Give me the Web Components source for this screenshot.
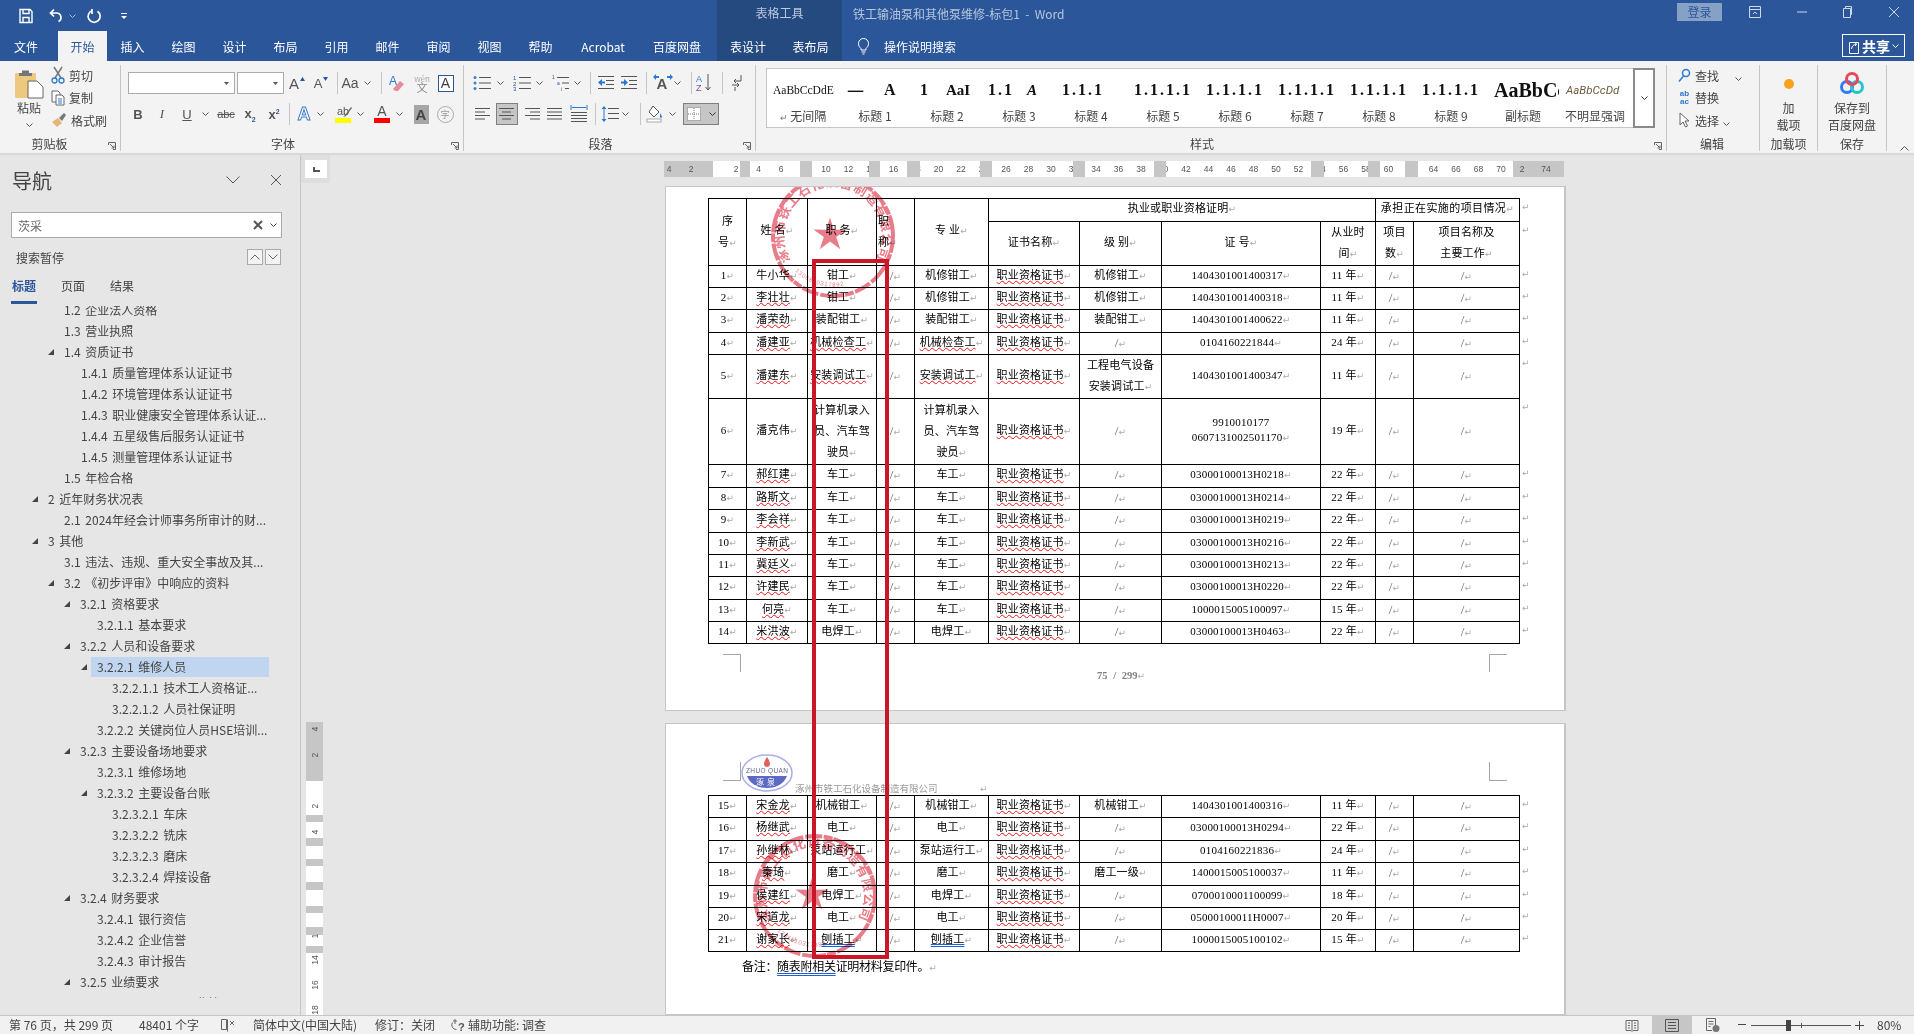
<!DOCTYPE html>
<html lang="zh">
<head>
<meta charset="utf-8">
<title>Word</title>
<style>
  html, body { margin: 0; height: 100%; overflow: hidden; background: #e6e6e6; }
  body { font: 12px "Noto Sans CJK SC", "Noto Sans", sans-serif; color: #444; }
</style>
</head>
<body>
<word-app></word-app>
<script>
const UI = "'Noto Sans CJK SC','Noto Sans',sans-serif";
const SANS = "'Liberation Sans',sans-serif";
const SERIF = "'Liberation Serif','Noto Sans CJK SC',serif";

// place items by centre x, in flow: each one gets the margin that is left over
function P(start, items) {
  let cur = start;
  return items.map(([c, w, h]) => {
    const l = c - w / 2, m = l - cur;
    cur = l + w;
    return `<span class="c" style="margin-left:${m}px;width:${w}px">${h}</span>`;
  }).join('');
}
const chev = (col = '#555') => `<svg width="7" height="4" viewBox="0 0 7 4"><path d="M.5.5l3 3 3-3" fill="none" stroke="${col}"/></svg>`;
const sep = '<i style="display:block;width:1px;height:22px;background:#c6c6c6"></i>';
const lines = (arr, col = '#555') => `<svg width="16" height="14" viewBox="0 0 16 14">${arr.map(([x, w], i) => `<rect x="${x}" y="${1 + i * 3.5}" width="${w}" height="1" fill="${col}"/>`).join('')}</svg>`;

class Base extends HTMLElement {
  connectedCallback() {
    if (!this.shadowRoot) this.attachShadow({ mode: 'open' }).innerHTML = this.render();
  }
}

class WordApp extends Base {
  render() {
    return `<style>
      :host { display: flex; flex-direction: column; width: 1914px; height: 1034px; overflow: hidden; }
      .mid { flex: 1; display: flex; min-height: 0; }
    </style>
    <word-titlebar></word-titlebar>
    <word-tabs></word-tabs>
    <word-ribbon></word-ribbon>
    <div class="mid"><word-nav></word-nav><word-doc></word-doc></div>
    <word-status></word-status>`;
  }
}

class WordTitlebar extends Base {
  render() {
    const ic = 'fill="none" stroke="#fff"';
    return `<style>
      :host { display: flex; height: 31px; background: #2b579a; color: #fff; }
      .c { display: flex; align-items: center; justify-content: center; flex-shrink: 0; height: 31px; }
      .ctx { height: 100%; width: 100%; background: #244a80; color: #b9c8de; display: flex; align-items: center; justify-content: center; padding-bottom: 6px; box-sizing: border-box; }
      .title { width: 100%; color: #b6c5dc; padding-bottom: 5px; white-space: pre; }
      .login { width: 100%; height: 18px; margin-bottom: 8px; background: #86a0c6; color: #2b579a; text-align: center; line-height: 18px; }
    </style>
    ${P(0, [
      [26, 18, `<svg width="16" height="16" viewBox="0 0 16 16" ${ic} stroke-width="1.4"><path d="M2 1.5h10l2 2v11H2z"/><path d="M5 1.5v4h6v-4M5 14.5v-5h6v5"/></svg>`],
      [56, 18, `<svg width="16" height="16" viewBox="0 0 16 16" ${ic} stroke-width="1.7"><path d="M6 1.5L2.5 5 6 8.500M2.500 5h6a4.500 4.500 0 0 1 2 8.500"/></svg>`],
      [72, 9, chev('#a9bcd8')],
      [94, 18, `<svg width="16" height="16" viewBox="0 0 16 16" ${ic} stroke-width="1.7"><path d="M6.500 2.500a6 6 0 1 0 5 .800M6 1v5"/></svg>`],
      [124, 10, `<svg width="8" height="8" viewBox="0 0 8 8"><path d="M1 1h6v1H1z" fill="#fff"/><path d="M1 4h6L4 7z" fill="#fff"/></svg>`],
      [779.500, 125, `<div class="ctx">表格工具</div>`],
      [973, 240, `<div class="title">铁工输油泵和其他泵维修-标包1  -  Word</div>`],
      [1699.500, 45, `<div class="login">登录</div>`],
      [1755, 16, `<svg style="margin-bottom:8px" width="14" height="14" viewBox="0 0 14 14" fill="none" stroke="#cdd8e8"><path d="M1.500 1.500h11v11h-11zM1.500 4.500h11M5 9l2-2 2 2"/></svg>`],
      [1802, 16, `<svg style="margin-bottom:8px" width="12" height="12" viewBox="0 0 12 12"><path d="M1 6h10" stroke="#cdd8e8"/></svg>`],
      [1847, 16, `<svg style="margin-bottom:8px" width="12" height="14" viewBox="0 0 12 14" fill="none" stroke="#cdd8e8"><path d="M2.500 3.500h7v9h-7zM4.500 3.500v-2h6v8h-1"/></svg>`],
      [1894, 16, `<svg style="margin-bottom:8px" width="12" height="12" viewBox="0 0 12 12" fill="none" stroke="#cdd8e8"><path d="M1 1l10 10M11 1L1 11"/></svg>`]
    ])}`;
  }
}

class WordTabs extends Base {
  render() {
    const t = (w, s, cls = '') => `<div class="t ${cls}" style="width:${w}px">${s}</div>`;
    return `<style>
      :host { display: flex; height: 30px; background: #2b579a; color: #fff; align-items: stretch; }
      .t { display: flex; align-items: center; justify-content: center; flex-shrink: 0; }
      .on { background: #f3f3f3; color: #2b579a; }
      .ctx { background: #244a80; }
      .bulb { margin-left: 15px; display: flex; align-items: center; gap: 14px; }
      .share { margin: 3px 9px 4px auto; width: 63px; box-sizing: border-box; border: 1px solid #fff; display: flex; align-items: center; justify-content: center; gap: 2px; font-size: 14px; font-weight: 700; }
    </style>
    ${t(52, '文件')}<div style="width:6px"></div>${t(49, '开始', 'on')}
    ${['插入', '绘图', '设计', '布局', '引用', '邮件', '审阅', '视图', '帮助'].map(s => t(51, s)).join('')}
    ${t(74, 'Acrobat')}${t(74, '百度网盘')}<div style="width:3px"></div>
    ${t(62, '表设计', 'ctx')}${t(63, '表布局', 'ctx')}
    <div class="bulb"><svg width="13" height="18" viewBox="0 0 13 18" fill="none" stroke="#fff"><path d="M4 11.500C2.500 10 1.500 9 1.500 6.500a5 5 0 0 1 10 0c0 2.500-1 3.500-2.500 5V13H4zM4.500 15h4M5.500 17h2"/></svg>操作说明搜索</div>
    <div class="share"><svg width="12" height="18" viewBox="0 0 12 18" fill="none" stroke="#fff"><path d="M1.500 5.500h9v11h-9z"/><path d="M3.500 12c.500-3 2-4.500 5-5M6.500 5.500L8.500 7 7 9"/></svg>共享${chev('#fff')}</div>`;
  }
}

class WordRibbon extends Base {
  render() {
    const A = (size, extra = '') => `<span style="font:${size}px ${SANS};color:#555;${extra}">A</span>`;
    const tri = (col, d) => `<svg style="margin:-9px 0 0 1px" width="5" height="4" viewBox="0 0 5 4"><path d="${d}" fill="${col}"/></svg>`;
    const launch = `<svg class="launch" width="8" height="8" viewBox="0 0 8 8" fill="none" stroke="#666"><path d="M.5 3V.5H7.500V7.500H5M2 2l4 4M6 3.500V6H3.500"/></svg>`;
    const fontRow1 = P(121, [
      [181.500, 107, `<div class="box"><svg width="5" height="3"><path d="M0 0h5L2.500 3z" fill="#555"/></svg></div>`],
      [260.500, 47, `<div class="box"><svg width="5" height="3"><path d="M0 0h5L2.500 3z" fill="#555"/></svg></div>`],
      [297, 20, A(15) + tri('#2b579a', 'M0 4h5L2.500 0z')],
      [321, 20, A(13) + tri('#2b579a', 'M0 0h5L2.500 4z')],
      [337, 1, sep],
      [350, 20, `<span style="font:14px ${SANS};color:#555">Aa</span>`],
      [367, 9, chev()],
      [381, 1, sep],
      [397, 18, `<svg width="18" height="18" viewBox="0 0 18 18"><text x="1" y="11" font-family="Liberation Sans" font-size="12" fill="#2b7ad0">A</text><path d="M5 15l7-8 4 3-6 7H7z" fill="#e78b9a"/></svg>`],
      [422, 18, `<span class="wen"><small>wén</small><b>文</b></span>`],
      [445.500, 16, `<span class="abox">A</span>`]
    ]);
    const fontRow2 = P(121, [
      [138, 14, `<span class="g" style="font-weight:700">B</span>`],
      [162, 14, `<span class="g" style="font-family:'Liberation Serif';font-style:italic">I</span>`],
      [187, 14, `<span class="g" style="text-decoration:underline">U</span>`],
      [205, 9, chev()],
      [226, 20, `<span class="g" style="text-decoration:line-through;font-size:11px">abc</span>`],
      [250, 16, `<span class="g" style="font-weight:700">x<sub style="font-size:7px;color:#2b579a">2</sub></span>`],
      [274, 16, `<span class="g" style="font-weight:700">x<sup style="font-size:7px;color:#2b579a">2</sup></span>`],
      [289, 1, sep],
      [304, 18, `<span style="font:700 18px ${SANS};color:#fff;-webkit-text-stroke:1px #3f7fc8">A</span>`],
      [320, 9, chev()],
      [343, 20, `<span class="bar" style="--b:#ffff00"><span>ab</span><svg style="position:absolute;left:7px;top:1px" width="11" height="12" viewBox="0 0 11 12"><path d="M9 1L3 9 1 11l3-1 6-8z" fill="#6a6a6a"/></svg></span>`],
      [360, 9, chev()],
      [382, 18, `<span class="bar" style="--b:#ff0000"><span style="font-size:14px">A</span></span>`],
      [399, 9, chev()],
      [421, 16, `<span style="display:block;width:15px;height:19px;background:#a6a6a6;color:#444;font:700 15px/19px ${SANS};text-align:center">A</span>`],
      [445, 18, `<span style="width:15px;height:15px;border:1px solid #aaa;border-radius:50%;font-size:9px;line-height:15px;text-align:center;color:#999">字</span>`]
    ]);
    const blist = `<svg width="18" height="16" viewBox="0 0 18 16"><g fill="#3f7fc8"><circle cx="2" cy="2.500" r="1.500"/><circle cx="2" cy="8" r="1.500"/><circle cx="2" cy="13.500" r="1.500"/></g><g fill="#555"><rect x="6" y="2" width="12" height="1"/><rect x="6" y="7.500" width="12" height="1"/><rect x="6" y="13" width="12" height="1"/></g></svg>`;
    const nlist = `<svg width="18" height="16" viewBox="0 0 18 16"><g fill="#2b579a" font-family="Liberation Sans" font-size="6"><text x="0" y="5">1</text><text x="0" y="10.500">2</text><text x="0" y="16">3</text></g><g fill="#555"><rect x="6" y="2" width="12" height="1"/><rect x="6" y="7.500" width="12" height="1"/><rect x="6" y="13" width="12" height="1"/></g></svg>`;
    const mlist = `<svg width="18" height="16" viewBox="0 0 18 16"><g fill="#2b579a" font-family="Liberation Sans" font-size="5"><text x="0" y="4">1</text><text x="5" y="10">a</text><text x="9" y="16">i</text></g><g fill="#555"><rect x="5" y="2" width="12" height="1"/><rect x="10" y="7.500" width="7" height="1"/><rect x="13" y="13" width="4" height="1"/></g></svg>`;
    const dent = (d) => `<svg width="18" height="16" viewBox="0 0 18 16"><g fill="#555"><rect x="1" y="1" width="16" height="1"/><rect x="9" y="5" width="8" height="1"/><rect x="9" y="9" width="8" height="1"/><rect x="1" y="13" width="16" height="1"/></g><path d="${d}" fill="#2b7ad0"/></svg>`;
    const paraRow1 = P(464, [
      [482, 20, blist], [500, 9, chev()], [522, 20, nlist], [539, 9, chev()], [561, 20, mlist], [577, 9, chev()],
      [590, 1, sep],
      [606, 18, dent('M1 7.500L5 4v2.500h3v2H5V11z')], [629, 18, dent('M8 7.500L4 4v2.500H1v2h3V11z')],
      [646, 1, sep],
      [662, 20, `<span style="position:relative;font:700 15px ${SANS};color:#555">A<svg style="position:absolute;left:-4px;top:-1px" width="20" height="6" viewBox="0 0 20 6"><path d="M0 3l3-3v2h3v2H3v2zM20 3l-3-3v2h-3v2h3v2z" fill="#2b7ad0"/></svg></span>`],
      [677, 9, chev()],
      [691, 1, sep],
      [704, 18, `<svg width="18" height="20" viewBox="0 0 18 20"><text x="1" y="9" font-family="Liberation Sans" font-size="9" fill="#2b7ad0">A</text><text x="1" y="18" font-family="Liberation Sans" font-size="9" fill="#7a4fa8">Z</text><path d="M13 1v16M10.500 14l2.500 3 2.500-3" fill="none" stroke="#555"/></svg>`],
      [722, 1, sep],
      [737, 14, `<svg width="12" height="18" viewBox="0 0 12 18" fill="none" stroke="#555"><path d="M10 1v6H3M5 5L3 7l2 2M1 11h7M6 9l2 2-2 2M4 13v4" /></svg>`]
    ]);
    const shade = `<svg width="18" height="18" viewBox="0 0 18 18"><path d="M7 1l6 6-5 5-5-5z" fill="#fff" stroke="#555"/><path d="M14 8s2 3 2 4-2 1-2 0 0-4 0-4z" fill="#2b7ad0"/><rect x="1" y="14" width="14" height="3" fill="#fff" stroke="#aaa"/></svg>`;
    const paraRow2 = P(464, [
      [483, 16, lines([[0, 15], [0, 10], [0, 15], [0, 10]])],
      [507, 22, `<span class="act" style="width:22px">${lines([[0, 15], [3, 9], [0, 15], [3, 9]])}</span>`],
      [532, 16, lines([[1, 15], [6, 10], [1, 15], [6, 10]])],
      [555, 16, lines([[0, 15], [0, 15], [0, 15], [0, 15]])],
      [579, 18, `<svg width="18" height="18" viewBox="0 0 18 18"><g fill="#555"><rect x="1" y="7" width="16" height="1"/><rect x="1" y="10" width="16" height="1"/><rect x="1" y="13" width="16" height="1"/><rect x="1" y="16" width="16" height="1"/></g><path d="M1 0v5M17 0v5M2 2.500h14" stroke="#2b7ad0" fill="none"/></svg>`],
      [595, 1, sep],
      [610, 18, `<svg width="18" height="18" viewBox="0 0 18 18"><g fill="#555"><rect x="7" y="3" width="11" height="1"/><rect x="7" y="8" width="11" height="1"/><rect x="7" y="13" width="11" height="1"/></g><path d="M3 1L.5 4h5zM3 17l-2.500-3h5zM2.500 4h1v10h-1z" fill="#2b7ad0"/></svg>`],
      [625, 9, chev()],
      [640, 1, sep],
      [655, 18, shade],
      [672, 9, chev()],
      [701, 36, `<span class="act" style="width:36px;gap:8px"><svg width="14" height="14" viewBox="0 0 14 14"><rect x=".5" y=".5" width="13" height="13" fill="#fff" stroke="#777" stroke-dasharray="1 1"/><path d="M7 1v12M1 7h12" stroke="#777" stroke-dasharray="1 1"/></svg>${chev('#333')}</span>`]
    ]);

    const sty = (label, preview) => `<div class="si"><div class="pv">${preview}</div><div class="sl">${label}</div></div>`;
    const num = (s, ml = 0) => `<span style="font:700 16px ${SERIF};letter-spacing:2px;margin-left:${ml}px;color:#111">${s}</span>`;
    const styles = [
      sty('<span style="font-size:9px;color:#777">↵</span> 无间隔', `<span style="font:11.500px ${SERIF};margin-left:6px;color:#111">AaBbCcDdE</span>`),
      sty('标题 1', `<span style="font:400 17px ${UI};color:#111;margin-left:8px">一</span><span style="font:700 16px ${SERIF};margin-left:20px;color:#111">A</span>`),
      sty('标题 2', num('1', 9) + `<span style="font:700 15px ${SERIF};margin-left:16px;color:#111">AaI</span>`),
      sty('标题 3', num('1.1', 5) + `<span style="font:italic 700 15px ${SERIF};margin-left:13px;color:#111">A</span>`),
      sty('标题 4', num('1.1.1', 7)), sty('标题 5', num('1.1.1.1', 7)), sty('标题 6', num('1.1.1.1', 7)),
      sty('标题 7', num('1.1.1.1', 7)), sty('标题 8', num('1.1.1.1', 7)), sty('标题 9', num('1.1.1.1', 7)),
      sty('副标题', `<span style="font:700 20px ${SERIF};margin-left:7px;color:#111">AaBbCcDd</span>`),
      sty('不明显强调', `<span style="font:italic 11.500px Roboto,sans-serif;margin-left:7px;color:#6b5a3a">AaBbCcDd</span>`)
    ].join('');

    return `<style>
      :host { display: flex; height: 94px; box-sizing: border-box; background: #f3f3f3; border-bottom: 2px solid #d8d8d8; position: relative; color: #444; }
      .c { display: flex; align-items: center; justify-content: center; flex-shrink: 0; }
      .g0 { box-sizing: border-box; border-right: 1px solid #c6c6c6; height: 86px; margin-top: 4px; display: flex; flex-direction: column; flex-shrink: 0; position: relative; }
      .body { height: 72px; }
      .lab { height: 14px; line-height: 14px; text-align: center; padding-right: 18px; }
      .launch { position: absolute; right: 4px; bottom: 1px; }
      .r2 { padding-top: 7px; box-sizing: border-box; display: flex; flex-direction: column; gap: 9px; }
      .row { display: flex; height: 22px; align-items: center; }
      .box { width: 100%; height: 22px; box-sizing: border-box; background: #fff; border: 1px solid #ababab; display: flex; align-items: center; justify-content: flex-end; padding-right: 5px; }
      .wen { display: flex; flex-direction: column; align-items: center; line-height: 9px; color: #aaa; }
      .wen small { font-size: 8px; } .wen b { font-weight: 400; font-size: 11px; color: #888; }
      .abox { width: 14px; height: 15px; border: 1px solid #2b579a; font: 14px/15px ${SANS}; text-align: center; color: #444; background: #fff; }
      .g { font: 13px ${SANS}; color: #555; }
      .bar { position: relative; display: flex; flex-direction: column; align-items: center; width: 16px; font: 11px/13px ${SANS}; color: #555; }
      .bar::after { content: ""; width: 16px; height: 5px; background: var(--b); }
      .act { height: 22px; box-sizing: border-box; background: #c6c6c6; border: 1px solid #7f7f7f; display: flex; align-items: center; justify-content: center; }
      .cut { display: flex; height: 72px; }
      .paste { margin-left: 14px; width: 30px; display: flex; flex-direction: column; align-items: center; padding-top: 4px; box-sizing: border-box; }
      .paste span { line-height: 18px; }
      .list { display: flex; flex-direction: column; margin-top: -1px; }
      .li { height: 22.500px; display: flex; align-items: center; gap: 4px; white-space: nowrap; }
      .gallery { display: flex; margin: 3px 0 0 10px; height: 60px; }
      .items { display: flex; width: 867px; box-sizing: border-box; background: #fff; border: 1px solid #c6c6c6; border-right: 0; }
      .si { width: 72px; flex-shrink: 0; overflow: hidden; }
      .pv { height: 36px; margin-top: 3px; display: flex; align-items: center; white-space: nowrap; overflow: hidden; }
      .sl { text-align: center; line-height: 16px; white-space: nowrap; }
      .scroll { width: 22px; box-sizing: border-box; border: 2px solid #8a8a8a; background: #fff; display: flex; align-items: center; justify-content: center; }
      .tall { display: flex; flex-direction: column; align-items: center; height: 72px; padding-top: 5px; box-sizing: border-box; }
      .tall .ico { height: 27px; display: flex; align-items: center; }
      .tall div.tx { line-height: 17px; text-align: center; margin-top: 2px; }
      .lab2 { padding-right: 0; }
      .collapse { position: absolute; left: 1900px; top: 85px; }
    </style>
    <div class="g0" style="width:121px">
      <div class="body cut">
        <div class="paste">
          <svg width="30" height="30" viewBox="0 0 30 30"><rect x="1" y="4" width="21" height="25" rx="1" fill="#edc87e"/><path d="M8 4V1.500h7V4h3v3H5V4z" fill="#767676"/><path d="M14 12h9l6 6v11H14z" fill="#fff" stroke="#666"/></svg>
          <span>粘贴</span>
          <span style="line-height:10px">${chev()}</span>
        </div>
        <div class="list" style="margin-left:7px">
          <div class="li"><svg width="14" height="18" viewBox="0 0 14 18" fill="none"><path d="M3 1l7 11M11 1L4 12" stroke="#777" stroke-width="1.500"/><circle cx="3.500" cy="14.500" r="2.500" stroke="#2b7ad0" stroke-width="1.300"/><circle cx="10.500" cy="14.500" r="2.500" stroke="#2b7ad0" stroke-width="1.300"/></svg>剪切</div>
          <div class="li"><svg width="14" height="16" viewBox="0 0 14 16" fill="#fff" stroke="#666"><path d="M1 1h6l2 2v9H1z"/><path d="M5 5h6l2 2v8H5z"/><path d="M7 9h4M7 11h4M7 13h4" stroke="#2b7ad0"/></svg>复制</div>
          <div class="li"><svg width="16" height="16" viewBox="0 0 16 16"><path d="M1 10l6-4 4 5-5 4z" fill="#e0b878"/><path d="M8 6l5-5 2 2-4 6z" fill="#777"/></svg>格式刷</div>
        </div>
      </div>
      <div class="lab" style="padding-right:21px">剪贴板</div>
      ${launch}
    </div>
    <div class="g0" style="width:343px">
      <div class="body r2"><div class="row">${fontRow1}</div><div class="row">${fontRow2}</div></div>
      <div class="lab">字体</div>
      ${launch}
    </div>
    <div class="g0" style="width:292px">
      <div class="body r2"><div class="row">${paraRow1}</div><div class="row">${paraRow2}</div></div>
      <div class="lab">段落</div>
      ${launch}
    </div>
    <div class="g0" style="width:911px">
      <div class="body gallery"><div class="items">${styles}</div><div class="scroll">${chev('#333')}</div></div>
      <div class="lab" style="margin-top:9px">样式</div>
      ${launch}
    </div>
    <div class="g0" style="width:93px">
      <div class="body list" style="padding-left:11px;box-sizing:border-box">
        <div class="li"><svg width="13" height="15" viewBox="0 0 13 15" fill="none" stroke="#2b7ad0" stroke-width="1.500"><circle cx="8" cy="5" r="3.500"/><path d="M5.500 8L1 13.500"/></svg>查找<span style="margin-left:12px">${chev()}</span></div>
        <div class="li"><span style="font:700 8px/8px ${SANS};color:#2b7ad0;text-align:center;width:13px">ab<br>ac</span>替换</div>
        <div class="li"><svg width="13" height="17" viewBox="0 0 13 17" fill="#fff" stroke="#666"><path d="M2 1v12l3-3 2.500 5 2-1-2.500-5h4z"/></svg>选择<span>${chev()}</span></div>
      </div>
      <div class="lab lab2" style="padding-right:2px;margin-top:1px">编辑</div>
    </div>
    <div class="g0" style="width:58px">
      <div class="body tall"><div class="ico"><svg width="14" height="14" viewBox="0 0 14 14"><circle cx="7" cy="7" r="5" fill="#f9a11b"/></svg></div><div class="tx">加<br>载项</div></div>
      <div class="lab lab2">加载项</div>
    </div>
    <div class="g0" style="width:69px">
      <div class="body tall"><div class="ico"><svg width="26" height="24" viewBox="0 0 26 24" fill="none" stroke-width="3"><circle cx="8" cy="15" r="5.500" stroke="#2e7cf6"/><circle cx="18" cy="15" r="5.500" stroke="#27c4c9"/><circle cx="13" cy="7" r="5.500" stroke="#e8465b"/></svg></div><div class="tx">保存到<br>百度网盘</div></div>
      <div class="lab lab2">保存</div>
    </div>
    <svg class="collapse" width="9" height="5" viewBox="0 0 9 5"><path d="M.5 4.500l4-4 4 4" fill="none" stroke="#555"/></svg>`;
  }
}

class TreeRow extends Base {
  render() {
    const x = Number(this.getAttribute('x'));
    const caret = this.hasAttribute('caret');
    const sel = this.hasAttribute('selected');
    return `<style>
      :host { display: flex; height: 21px; align-items: center; padding-left: ${x - 16}px; white-space: nowrap; word-spacing: 2px; }
      .k { width: 16px; flex-shrink: 0; display: flex; align-items: center; }
      .t { line-height: 20px; color: #444; }
      .sel { background: #c0d5f0; width: 172px; margin-left: -6px; padding-left: 6px; }
    </style>
    <span class="k">${caret ? '<svg width="6" height="6" viewBox="0 0 6 6"><path d="M6 0v6H0z" fill="#444"/></svg>' : ''}</span>
    <span class="t ${sel ? 'sel' : ''}"><slot></slot></span>`;
  }
}

const TREE = [
  [64, 0, '1.2 企业法人资格'], [64, 0, '1.3 营业执照'], [64, 1, '1.4 资质证书'],
  [81, 0, '1.4.1 质量管理体系认证证书'], [81, 0, '1.4.2 环境管理体系认证证书'], [81, 0, '1.4.3 职业健康安全管理体系认证...'],
  [81, 0, '1.4.4 五星级售后服务认证证书'], [81, 0, '1.4.5 测量管理体系认证证书'], [64, 0, '1.5 年检合格'],
  [48, 1, '2 近年财务状况表'], [64, 0, '2.1 2024年经会计师事务所审计的财...'], [48, 1, '3 其他'],
  [64, 0, '3.1 违法、违规、重大安全事故及其...'], [64, 1, '3.2 《初步评审》中响应的资料'], [80, 1, '3.2.1 资格要求'],
  [97, 0, '3.2.1.1 基本要求'], [80, 1, '3.2.2 人员和设备要求'], [97, 2, '3.2.2.1 维修人员'],
  [112, 0, '3.2.2.1.1 技术工人资格证...'], [112, 0, '3.2.2.1.2 人员社保证明'], [97, 0, '3.2.2.2 关键岗位人员HSE培训...'],
  [80, 1, '3.2.3 主要设备场地要求'], [97, 0, '3.2.3.1 维修场地'], [97, 1, '3.2.3.2 主要设备台账'],
  [112, 0, '3.2.3.2.1 车床'], [112, 0, '3.2.3.2.2 铣床'], [112, 0, '3.2.3.2.3 磨床'], [112, 0, '3.2.3.2.4 焊接设备'],
  [80, 1, '3.2.4 财务要求'], [97, 0, '3.2.4.1 银行资信'], [97, 0, '3.2.4.2 企业信誉'], [97, 0, '3.2.4.3 审计报告'],
  [80, 1, '3.2.5 业绩要求'], [97, 0, '3.2.5.1 2023-2024业绩...']
];

class WordNav extends Base {
  render() {
    const rows = TREE.map(([x, k, s]) => `<tree-row x="${x}"${k ? ' caret' : ''}${k === 2 ? ' selected' : ''}>${s}</tree-row>`).join('');
    const nb = d => `<span class="nb"><svg width="10" height="6" viewBox="0 0 10 6"><path d="${d}" fill="none" stroke="#666"/></svg></span>`;
    return `<style>
      :host { display: flex; flex-direction: column; width: 301px; flex-shrink: 0; box-sizing: border-box; border-right: 1px solid #c6c6c6; background: #e6e6e6; color: #444; }
      .head { height: 50px; display: flex; align-items: center; padding: 0 18px 0 12px; font-size: 20px; }
      .head svg:first-of-type { margin-left: auto; margin-right: 30px; }
      .search { margin: 7px 0 0 11px; width: 271px; height: 26px; box-sizing: border-box; background: #fff; border: 1px solid #ababab; display: flex; align-items: center; padding: 0 4px 0 6px; color: #666; }
      .search svg:first-of-type { margin-left: auto; margin-right: 7px; }
      .st { height: 38px; display: flex; align-items: center; padding-left: 16px; }
      .nb { width: 14px; height: 14px; border: 1px solid #aaa; background: #f3f3f3; display: flex; align-items: center; justify-content: center; margin-left: 2px; }
      .nb:first-of-type { margin-left: auto; }
      .st > div { margin-left: auto; margin-right: 19px; display: flex; }
      .tabs { display: flex; padding-left: 12px; gap: 25px; height: 28px; box-sizing: border-box; }
      .tabs span { width: 24px; line-height: 20px; white-space: nowrap; }
      .tabs .on { color: #2b579a; font-weight: 700; position: relative; }
      .tabs .on::after { content: ""; position: absolute; left: -1px; right: -1px; top: 25px; height: 3px; background: #2b579a; }
      .tree { margin-top: 2px; height: 692px; overflow: hidden; }
      .tree > div { margin-top: -7px; }
    </style>
    <div class="head"><span>导航</span>
      <svg width="14" height="8" viewBox="0 0 14 8"><path d="M.5.5L7 7 13.500.5" fill="none" stroke="#555"/></svg>
      <svg width="12" height="12" viewBox="0 0 12 12"><path d="M1 1l10 10M11 1L1 11" fill="none" stroke="#555"/></svg></div>
    <div class="search"><span>茨采</span>
      <svg width="10" height="10" viewBox="0 0 10 10"><path d="M1 1l8 8M9 1L1 9" stroke="#555" stroke-width="2"/></svg>
      ${chev('#444')}</div>
    <div class="st"><span>搜索暂停</span><div>${nb('M.5 5.500L5 1l4.500 4.500')}${nb('M.5.5L5 5 9.500.5')}</div></div>
    <div class="tabs"><span class="on">标题</span><span>页面</span><span>结果</span></div>
    <div class="tree"><div>${rows}</div></div>`;
  }
}

class HRuler extends Base {
  render() {
    const marks = [[740, 750], [800, 812], [869, 880], [907, 920], [980, 992], [1073, 1085], [1154, 1166], [1311, 1324], [1368, 1380], [1405, 1418]];
    let cur = 713, segs = '<i class="e" style="width:49px"></i>';
    for (const [a, b] of marks) {
      segs += `<i style="flex:0 0 ${a - cur}px"></i><i class="m" style="width:${b - a}px"></i>`;
      cur = b;
    }
    segs += `<i style="flex:0 0 ${1513 - cur}px"></i><i class="e" style="width:51px"></i>`;
    let nums = '';
    for (let v = 2; v <= 70; v += 2) {
      nums += `<span style="left:${736 + (v - 2) * 11.25 - 664}px">${v}</span>`;
    }
    return `<style>
      :host { display: block; position: relative; width: 900px; height: 16px; background: #fff; overflow: hidden; font: 8.500px/16px ${SANS}; color: #555; }
      .s { display: flex; height: 16px; position: relative; }
      i { display: block; flex-shrink: 0; }
      .m, .e { background: #c6c6c6; position: relative; z-index: 2; }
      span { position: absolute; top: 0; transform: translateX(-50%); }
      .top { z-index: 3; }
    </style>
    <div class="s">${segs}</div>${nums}
    <span class="top" style="left:5px">4</span><span class="top" style="left:27px">2</span>
    <span class="top" style="left:858px">2</span><span class="top" style="left:882px">74</span>`;
  }
}

class VRuler extends Base {
  render() {
    const segs = [[59, 1], [34, 0], [7, 1], [16, 0], [8, 1], [13, 0], [7, 1], [16, 0], [8, 1], [16, 0], [7, 1], [14, 0], [8, 1], [11, 0], [7, 1], [62, 0]];
    const nums = [[7, '4'], [33, '2'], [84, '2'], [110, '4'], [214, '1'], [238, '14'], [263, '16'], [288, '18']];
    return `<style>
      :host { display: flex; flex-direction: column; position: relative; width: 17px; height: 293px; background: #fff; overflow: hidden; font: 8.500px/10px ${SANS}; color: #555; }
      i { display: block; flex-shrink: 0; }
      .m { background: #c6c6c6; }
      span { position: absolute; left: 3px; width: 11px; text-align: center; transform: translateY(-50%) rotate(-90deg); }
    </style>
    ${segs.map(([h, g]) => `<i class="${g ? 'm' : ''}" style="height:${h}px"></i>`).join('')}
    ${nums.map(([y, s]) => `<span style="top:${y}px">${s}</span>`).join('')}`;
  }
}

class PageSheet extends Base {
  render() {
    return `<style>
      :host { display: block; position: relative; box-sizing: border-box; width: 901px; background: #fff; overflow: hidden; border: 1px solid #c6c6c6; border-right-width: 2px; flex-shrink: 0; }
    </style><slot></slot>`;
  }
}

// ~ red squiggle, = blue double underline
const cellText = s => s[0] === '~' ? `<span class="s">${s.slice(1)}</span>` : s[0] === '=' ? `<span class="b">${s.slice(1)}</span>` : s;
const HEADER = `
  <tr style="height:23px"><td rowspan="2" class="ml">序<br>号</td><td rowspan="2">姓 名</td><td rowspan="2">职 务</td><td rowspan="2" class="ml left">职<br>称</td><td rowspan="2">专 业</td><td colspan="4">执业或职业资格证明</td><td colspan="2" style="letter-spacing:.4px">承担正在实施的项目情况</td><td class="e"></td></tr>
  <tr style="height:44px"><td>证书名称</td><td>级 别</td><td>证 号</td><td class="ml">从业时<br>间</td><td class="ml">项目<br>数</td><td class="ml">项目名称及<br>主要工作</td><td class="e"></td></tr>`;
const P1 = [
  [22, 1, '牛小华', '钳工', '机修钳工', '机修钳工', '1404301001400317', 11],
  [22, 2, '~李壮壮', '钳工', '机修钳工', '机修钳工', '1404301001400318', 11],
  [23, 3, '~潘荣劲', '装配钳工', '装配钳工', '装配钳工', '1404301001400622', 11],
  [22, 4, '~潘建亚', '~机械检查工', '~机械检查工', '/', '0104160221844', 24],
  [44, 5, '~潘建东', '~安装调试工', '~安装调试工', '工程电气设备<br>安装调试工', '1404301001400347', 11],
  [66, 6, '潘克伟', '计算机录入<br>员、汽车驾<br>驶员', '计算机录入<br>员、汽车驾<br>驶员', '/', '9910010177<br>0607131002501170', 19],
  [23, 7, '~郝红建', '车工', '车工', '/', '03000100013H0218', 22],
  [22, 8, '~路斯文', '车工', '车工', '/', '03000100013H0214', 22],
  [23, 9, '~李会祥', '车工', '车工', '/', '03000100013H0219', 22],
  [22, 10, '~李新武', '车工', '车工', '/', '03000100013H0216', 22],
  [22, 11, '~冀廷义', '车工', '车工', '/', '03000100013H0213', 22],
  [23, 12, '~许建民', '车工', '车工', '/', '03000100013H0220', 22],
  [22, 13, '~何亮', '车工', '车工', '/', '1000015005100097', 15],
  [22, 14, '~米洪波', '电焊工', '电焊工', '/', '03000100013H0463', 22]
];
const P2 = [
  [22, 15, '~宋金龙', '机械钳工', '机械钳工', '机械钳工', '1404301001400316', 11],
  [23, 16, '~杨继武', '电工', '电工', '/', '03000100013H0294', 22],
  [22, 17, '~孙继林', '泵站运行工', '泵站运行工', '/', '0104160221836', 24],
  [23, 18, '~秦琦', '磨工', '磨工', '磨工一级', '1400015005100037', 11],
  [22, 19, '~侯建红', '电焊工', '电焊工', '/', '0700010001100099', 18],
  [22, 20, '~宋道龙', '电工', '电工', '/', '05000100011H0007', 20],
  [22, 21, '~谢家长', '=刨插工', '=刨插工', '/', '1000015005100102', 15]
];

class DocTable extends Base {
  render() {
    const data = this.getAttribute('page') === '2' ? P2 : P1;
    const head = this.getAttribute('page') === '2' ? '' : HEADER;
    const widths = [38, 61, 69, 38, 74, 91, 82, 159, 55, 38, 106, 25];
    const tall = (s) => s.includes('<br>') ? 'class="ml"' : '';
    const rows = data.map(([h, no, name, job, spec, lvl, cert, yrs]) => `<tr style="height:${h}px">
      <td>${no}</td><td>${cellText(name)}</td><td ${tall(job)}>${cellText(job)}</td><td class="q">/</td>
      <td ${tall(spec)}>${cellText(spec)}</td><td>${cellText('~职业资格证书')}</td>
      <td ${lvl === '/' ? 'class="q"' : tall(lvl)}>${lvl}</td>
      <td ${cert.includes('<br>') ? 'class="tw"' : ''}>${cert}</td><td>${yrs} 年</td><td class="q">/</td><td class="q">/</td><td class="e"></td></tr>`).join('');
    return `<style>
      :host { display: block; width: 836px; color: #000; }
      table { border-collapse: collapse; table-layout: fixed; width: 836px; font: 11px ${SERIF}; letter-spacing: .2px; }
      td { border: 1px solid #000; padding: 0 0 3px; line-height: 17px; text-align: center; vertical-align: middle; overflow: hidden; white-space: nowrap; }
      td::after { content: "↵"; font: 9px "DejaVu Sans", sans-serif; color: #aaa; }
      td.ml { line-height: 21px; padding-bottom: 1px; }
      td.tw { line-height: 15px; }
      td.left { text-align: left; padding-left: 1px; }
      td.q { color: #666; font-size: 13px; line-height: 15px; padding-bottom: 3px; }
      td.e { border: 0; text-align: left; padding-left: 2px; vertical-align: top; line-height: 15px; }
      .s { text-decoration: underline wavy #f01414 1.2px; text-underline-offset: 1px; }
      .b { text-decoration: underline double #1f5fd6 1px; text-underline-offset: 1px; }
    </style>
    <table><colgroup>${widths.map(w => `<col style="width:${w}px">`).join('')}</colgroup>${head}${rows}</table>`;
  }
}

class DocStamp extends Base {
  render() {
    const pts = [];
    for (let i = 0; i < 10; i++) {
      const r = i % 2 ? 6.500 : 17.500, a = -Math.PI / 2 + i * Math.PI / 5;
      pts.push((62 + r * Math.cos(a)).toFixed(1) + ',' + (64 + r * Math.sin(a)).toFixed(1));
    }
    return `<style>
      :host { display: block; position: absolute; left: ${this.getAttribute('x')}px; top: ${this.getAttribute('y')}px; width: 130px; height: 130px; mix-blend-mode: multiply; pointer-events: none; }
      svg { display: block; }
    </style>
    <svg width="130" height="130" viewBox="0 0 130 130">
      <defs><path id="arc" d="M22.700 89.500A49 49 0 1 1 107.300 89.500"/><path id="arcb" d="M27 100A54 54 0 0 0 103 100"/></defs>
      <g fill="#e04a5c" opacity=".72">
        <circle cx="65" cy="65" r="60" fill="none" stroke="#e04a5c" stroke-width="4" stroke-dasharray="17 1.500 9 1 24 2"/>
        <polygon points="${pts.join(' ')}"/>
        <text font-family="Noto Sans CJK SC" font-size="13" font-weight="700" letter-spacing=".6"><textPath href="#arc">涿州市铁工石化设备制造有限公司</textPath></text>
        <text font-family="Liberation Sans" font-size="6" letter-spacing=".8"><textPath href="#arcb">1306810317892</textPath></text>
      </g>
    </svg>`;
  }
}

class WordDoc extends Base {
  render() {
    return `<style>
      :host { flex: 1; display: flex; min-width: 0; background: #e6e6e6; }
      .left { width: 363px; flex-shrink: 0; display: flex; flex-direction: column; }
      .corner { width: 29px; height: 28px; box-sizing: border-box; background: #dedede; padding: 5px 4px; }
      .corner div { width: 22px; height: 18px; background: #fff; display: flex; align-items: center; justify-content: center; }
      v-ruler { margin: 539px 0 0 5px; }
      .right { flex: 1; padding-top: 6px; display: flex; flex-direction: column; min-width: 0; }
      .pages { position: relative; margin: 9px 0 0 1px; display: flex; flex-direction: column; gap: 12px; flex: 1; min-height: 0; }
      .p1 { height: 525px; padding: 11px 0 0 42px; }
      .p2 { flex: 1; min-height: 0; padding: 38px 0 0 42px; }
      .foot { display: flex; align-items: flex-start; padding: 10px 15px 0; margin-right: 42px; justify-content: space-between; }
      .crop { width: 18px; height: 18px; box-sizing: border-box; border: 0 solid #a6a6a6; }
      .pn { font: 700 10.500px ${SERIF}; word-spacing: 3px; color: #808080; margin: 16px 0 0 12px; }
      .pn::after, .hd::after, .note::after { content: "↵"; font: 9px "DejaVu Sans", sans-serif; color: #aaa; font-weight: 400; word-spacing: 0; }
      .crops { display: flex; justify-content: space-between; padding: 0 15px; margin-right: 42px; }
      .hd { height: 14px; margin-left: 87px; font: 9.500px/14px ${UI}; color: #999; white-space: pre; }
      .note { margin: 4px 0 0 34px; font: 12px/20px ${UI}; color: #000; letter-spacing: -.3px; }
      .note .b { text-decoration: underline double #1f5fd6; text-underline-offset: 2px; }
      .logo { position: absolute; left: 75px; top: 30px; }
      .redbox { position: absolute; left: 147px; top: 73px; width: 77px; height: 700px; box-sizing: border-box; border: 4px solid #cb1628; z-index: 5; pointer-events: none; }
    </style>
    <div class="left">
      <div class="corner"><div><svg width="7" height="5" viewBox="0 0 7 5"><path d="M0 0h2v3h5v2H0z" fill="#555"/></svg></div></div>
      <v-ruler></v-ruler>
    </div>
    <div class="right">
      <h-ruler></h-ruler>
      <div class="pages">
        <page-sheet class="p1">
          <doc-table page="1"></doc-table>
          <div class="foot">
            <div class="crop" style="border-top-width:1px;border-right-width:1px"></div>
            <div class="pn">75 / 299</div>
            <div class="crop" style="border-top-width:1px;border-left-width:1px"></div>
          </div>
          <doc-stamp x="102" y="-16"></doc-stamp>
        </page-sheet>
        <page-sheet class="p2">
          <div class="crops">
            <div class="crop" style="height:19px;border-bottom-width:1px;border-right-width:1px"></div>
            <div class="crop" style="height:19px;border-bottom-width:1px;border-left-width:1px"></div>
          </div>
          <div class="hd">涿州市铁工石化设备制造有限公司                    </div>
          <doc-table page="2"></doc-table>
          <div class="note">备注：<span class="b">随表附相关</span>证明材料复印件。</div>
          <svg class="logo" width="52" height="38" viewBox="0 0 52 38">
            <ellipse cx="26" cy="19" rx="25" ry="18" fill="#fff" stroke="#a9aeea" stroke-width="1.500"/>
            <path d="M6 22h40c-3 8-11 12-20 12S9 30 6 22z" fill="#5c6ac4"/>
            <path d="M26 3c2 3 3 5 3 7s-1.500 3-3 3-3-1-3-3 1-4 3-7z" fill="#e0605a"/>
            <text x="26" y="19" text-anchor="middle" font-family="Liberation Sans" font-size="6.500" fill="#5f6788" textLength="42">ZHUO QUAN</text>
            <text x="26" y="31" text-anchor="middle" font-family="Noto Sans CJK SC" font-size="8" fill="#fff" letter-spacing="3">涿泉</text>
          </svg>
          <doc-stamp x="84" y="107"></doc-stamp>
        </page-sheet>
        <div class="redbox"></div>
      </div>
    </div>`;
  }
}

class WordStatus extends Base {
  render() {
    const left = (x, w, s) => [x + w / 2, w, `<span style="width:100%;white-space:nowrap">${s}</span>`];
    const g = 'fill="none" stroke="#666"';
    return `<style>
      :host { display: flex; height: 19px; flex-shrink: 0; box-sizing: border-box; background: #f1f1f1; border-top: 1px solid #c6c6c6; color: #444; align-items: stretch; line-height: 18px; }
      .c { display: flex; align-items: center; justify-content: center; flex-shrink: 0; }
      .act { width: 100%; height: 100%; background: #c6c6c6; display: flex; align-items: center; justify-content: center; }
      .sl { width: 100px; height: 1px; background: #555; position: relative; }
      .sl b { position: absolute; left: 35px; top: -5px; width: 5px; height: 11px; background: #444; }
      .sl u { position: absolute; left: 50px; top: -2px; width: 1px; height: 5px; background: #555; }
    </style>
    ${P(0, [
      left(9, 112, '第 76 页，共 299 页'),
      left(139, 66, '48401 个字'),
      [228, 16, `<svg width="16" height="14" viewBox="0 0 16 14" ${g}><path d="M1.500 1.500h5v10h-5zM7.500 1.500v12M10 3l4 4M14 3l-4 4"/></svg>`],
      left(253, 115, '简体中文(中国大陆)'),
      left(375, 60, '修订：关闭'),
      [457, 16, `<svg width="15" height="14" viewBox="0 0 15 14" ${g}><path d="M5 1v5M3 3h4M2.500 4.500a4.500 4.500 0 0 0 4 7"/><text x="8" y="13" font-family="Liberation Sans" font-size="11" font-weight="700" fill="#555" stroke="none">?</text></svg>`],
      left(468, 90, '辅助功能: 调查'),
      [1632, 16, `<svg width="14" height="13" viewBox="0 0 14 13" ${g}><path d="M1 1.500h5.500l.500 1 .500-1H13v10H8l-1 1-1-1H1zM7 2.500v9M3 4h2M3 6.500h2M3 9h2M9 4h2M9 6.500h2M9 9h2"/></svg>`],
      [1672, 40, `<span class="act"><svg width="14" height="13" viewBox="0 0 14 13" fill="none" stroke="#555"><path d="M.5.500h13v12H.5zM3 3.500h8M3 6.500h8M3 9.500h8"/></svg></span>`],
      [1712, 16, `<svg width="15" height="14" viewBox="0 0 15 14" ${g}><path d="M1.500.500h9V7M7 12.500H1.500v-12M3.500 3.500h5M3.500 6h5M3.500 8.500h2"/><circle cx="11" cy="10.500" r="3.500" fill="#777" stroke="none"/></svg>`],
      [1742, 10, `<svg width="8" height="2"><rect width="8" height="1" fill="#444"/></svg>`],
      [1801, 100, `<span class="sl"><b></b><u></u></span>`],
      [1859, 10, `<svg width="9" height="9" viewBox="0 0 9 9"><path d="M0 4.500h9M4.500 0v9" stroke="#444"/></svg>`],
      left(1877, 28, '80%')
    ])}`;
  }
}

customElements.define('word-app', WordApp);
customElements.define('word-titlebar', WordTitlebar);
customElements.define('word-tabs', WordTabs);
customElements.define('word-ribbon', WordRibbon);
customElements.define('tree-row', TreeRow);
customElements.define('word-nav', WordNav);
customElements.define('h-ruler', HRuler);
customElements.define('v-ruler', VRuler);
customElements.define('page-sheet', PageSheet);
customElements.define('doc-table', DocTable);
customElements.define('doc-stamp', DocStamp);
customElements.define('word-doc', WordDoc);
customElements.define('word-status', WordStatus);
</script>
</body>
</html>
